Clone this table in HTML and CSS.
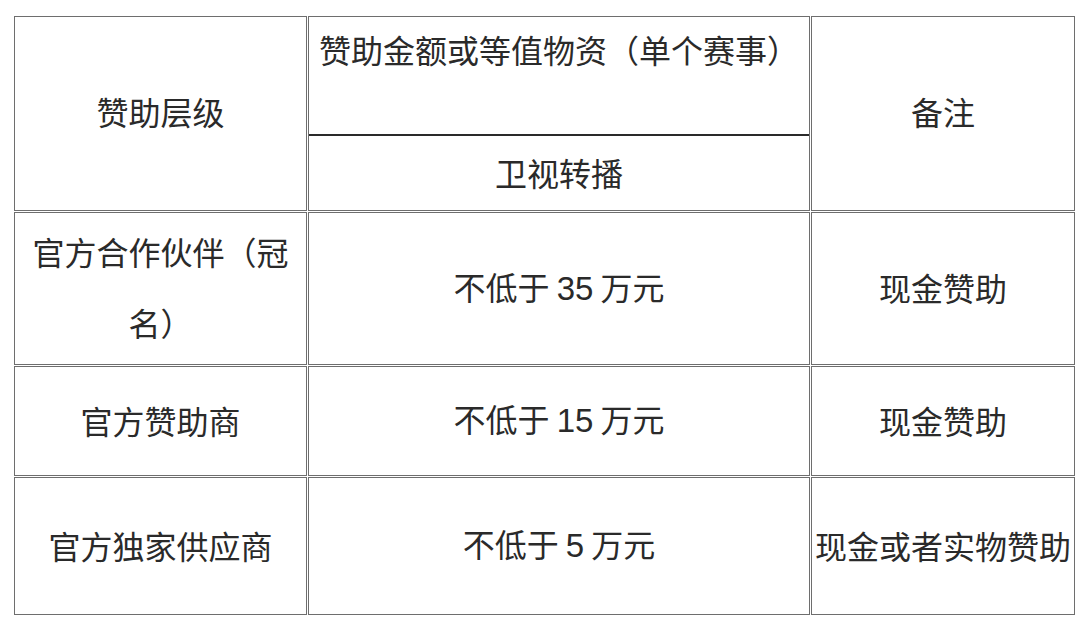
FILE: index.html
```html
<!DOCTYPE html>
<html lang="zh-CN">
<head>
<meta charset="utf-8">
<title>赞助层级</title>
<link rel="stylesheet" href="styles.css">
</head>
<body>
<table class="sponsor">
  <colgroup>
    <col class="c1">
    <col class="c2">
    <col class="c3">
  </colgroup>
  <tr class="r-head">
    <td class="lift">赞助层级</td>
    <td class="split">
      <div class="split-top">赞助金额或等值物资（单个赛事）</div>
      <div class="split-bottom">卫视转播</div>
    </td>
    <td class="lift">备注</td>
  </tr>
  <tr class="r-2">
    <td class="tall">官方合作伙伴（冠<br>名）</td>
    <td>不低于 <span class="num">35</span> 万元</td>
    <td>现金赞助</td>
  </tr>
  <tr class="r-3">
    <td>官方赞助商</td>
    <td>不低于 <span class="num">15</span> 万元</td>
    <td>现金赞助</td>
  </tr>
  <tr class="r-4">
    <td>官方独家供应商</td>
    <td>不低于 <span class="num">5</span> 万元</td>
    <td class="nowrap">现金或者实物赞助</td>
  </tr>
</table>
</body>
</html>
```

FILE: styles.css
```css
html, body {
  margin: 0;
  padding: 0;
  background: #ffffff;
}

body {
  font-family: "Liberation Sans", "Noto Sans CJK SC", sans-serif;
  color: #2a2a2a;
}

.sponsor {
  margin: 15px 0 0 13px;
  border-collapse: separate;
  border-spacing: 1px;
  table-layout: fixed;
  width: 1063px;
}

.c1 { width: 293px; }
.c2 { width: 502px; }
.c3 { width: 264px; }

.sponsor td {
  box-sizing: border-box;
  border: 1px solid #6e6e6e;
  padding: 0 0 3px 0;
  text-align: center;
  vertical-align: middle;
  font-size: 32px;
  line-height: 40px;
  font-family: "Noto Sans CJK SC", sans-serif;
}

.sponsor .num {
  font-family: "Liberation Sans", sans-serif;
  font-size: 33px;
}

.r-head { height: 195px; }
.r-2 { height: 153px; }
.r-3 { height: 110px; }
.r-4 { height: 138px; }

.sponsor td.lift {
  padding-bottom: 6px;
}

.sponsor td.split {
  vertical-align: top;
  padding: 0;
}

.split-top {
  box-sizing: border-box;
  height: 119px;
  padding-top: 12px;
  border-bottom: 2px solid #2a2a2a;
  white-space: nowrap;
}

.split-bottom {
  box-sizing: border-box;
  height: 74px;
  line-height: 72px;
}

.sponsor td.tall {
  line-height: 71px;
  padding-bottom: 4px;
}

.sponsor td.nowrap {
  white-space: nowrap;
}
```
